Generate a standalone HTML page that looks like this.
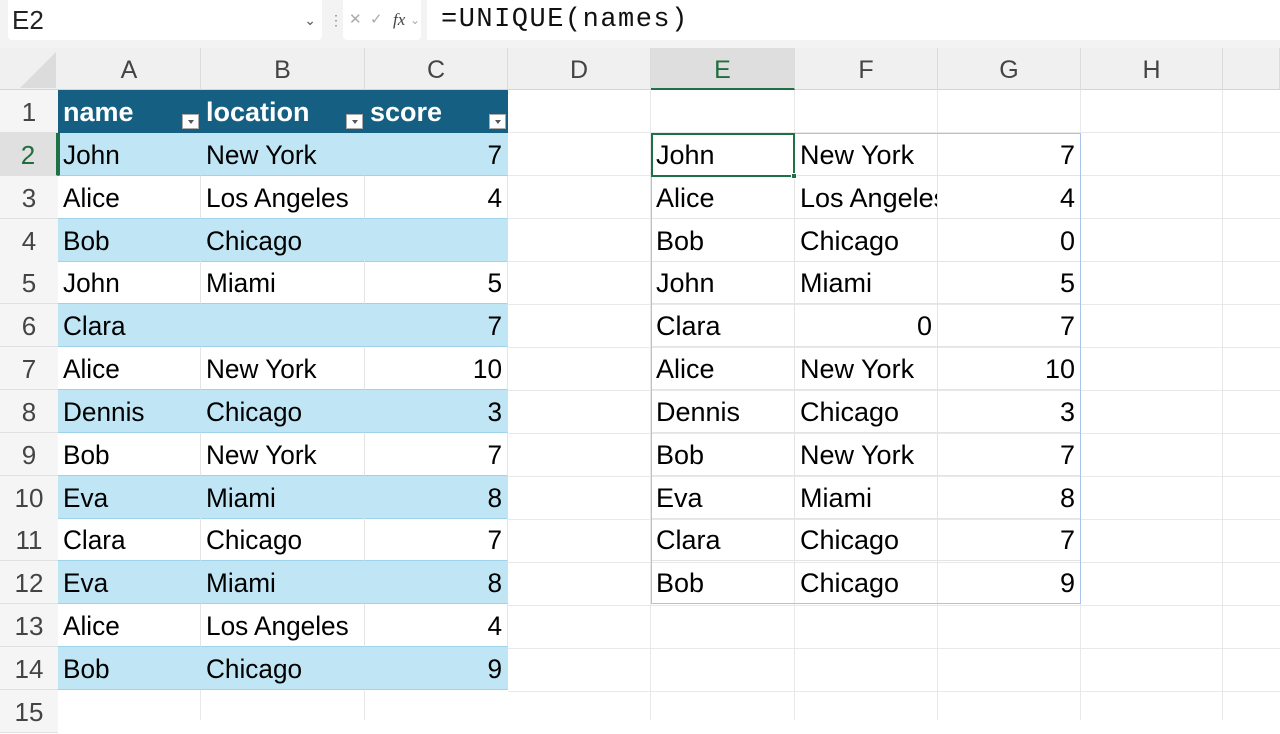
<!DOCTYPE html><html><head><style>
*{margin:0;padding:0;box-sizing:border-box}
body{width:1280px;height:720px;overflow:hidden;background:#fff;font-family:"Liberation Sans",sans-serif;position:relative}
.top{position:absolute;left:0;top:0;width:1280px;height:48px;background:#f3f3f3}
.nb{position:absolute;left:8px;top:0;width:314px;height:40px;background:#fff;border-radius:0 0 4px 4px;font-size:26px;line-height:40px;padding-left:4px;color:#222}
.fb{position:absolute;left:343px;top:0;width:78px;height:40px;background:#fff;border-radius:0 0 4px 4px;color:#aaa;font-size:15px;line-height:40px}
.ff{position:absolute;left:427px;top:0;width:853px;height:40px;background:#fff;font-size:27px;line-height:40px;padding-left:14px;font-family:"Liberation Mono",monospace;color:#111;letter-spacing:1.5px}
.ch{position:absolute;top:48px;height:42px;background:#f0f0f0;border-right:1px solid #dcdcdc;border-bottom:1px solid #d4d4d4;text-align:center;font-size:25px;line-height:44px;color:#444}
.rh{position:absolute;left:0;width:58px;height:43px;background:#f5f5f5;border-bottom:1px solid #e0e0e0;text-align:center;font-size:26px;line-height:44px;color:#444}
.c{position:absolute;height:43px;border-right:1px solid #e4e4e4;border-bottom:1px solid #e4e4e4;font-size:27px;line-height:45px;color:#000;white-space:nowrap;overflow:hidden;padding:0 5px}
.n span{display:inline-block;transform:scaleX(.97);transform-origin:left}
.n.rt span{transform-origin:right}
.rt{text-align:right}
.b{background:#c0e6f5;border-right-color:#c0e6f5;border-bottom-color:#9fd3ec}
.w{border-bottom-color:#9fd3ec}
.hd{background:#156082;color:#fff;font-weight:bold;border-color:#156082}
.dd{position:absolute;bottom:3px;width:17px;height:15px;background:#fff;border:1px solid #aaa}
.dd:after{content:"";position:absolute;left:5px;top:5px;border:3px solid transparent;border-top:4px solid #555}
</style></head><body>
<div class="top"></div>
<div class="nb">E2<span style="position:absolute;right:6px;top:0;font-size:14px;color:#555">&#8964;</span></div>
<div style="position:absolute;left:329px;top:12px;color:#888;font-size:14px">&#8942;</div>
<div class="fb"><span style="position:absolute;left:6px">&#10005;</span><span style="position:absolute;left:27px">&#10003;</span><i style="position:absolute;left:50px;color:#444;font-family:'Liberation Serif',serif;font-size:17px">fx</i><span style="position:absolute;left:67px;font-size:12px">&#8964;</span></div>
<div class="ff">=UNIQUE(names)</div>
<div style="position:absolute;left:0;top:48px;width:58px;height:42px;background:#f0f0f0;border-bottom:1px solid #d4d4d4"></div>
<div style="position:absolute;left:20px;top:52px;width:0;height:0;border-left:36px solid transparent;border-bottom:36px solid #dcdcdc"></div>
<div class="ch" style="left:58px;width:143px">A</div>
<div class="ch" style="left:201px;width:164px">B</div>
<div class="ch" style="left:365px;width:143px">C</div>
<div class="ch" style="left:508px;width:143px">D</div>
<div class="ch" style="left:651px;width:144px;background:#dedede;color:#1e6e3e;border-bottom:2px solid #1e7145">E</div>
<div class="ch" style="left:795px;width:143px">F</div>
<div class="ch" style="left:938px;width:143px">G</div>
<div class="ch" style="left:1081px;width:142px">H</div>
<div class="ch" style="left:1223px;width:57px"></div>

<div class="rh" style="top:90px">1</div>
<div class="rh" style="top:133px;background:#e0e0e0;color:#1e6e3e;border-right:2px solid #1e7145">2</div>
<div class="rh" style="top:176px">3</div>
<div class="rh" style="top:219px">4</div>
<div class="rh" style="top:261px">5</div>
<div class="rh" style="top:304px">6</div>
<div class="rh" style="top:347px">7</div>
<div class="rh" style="top:390px">8</div>
<div class="rh" style="top:433px">9</div>
<div class="rh" style="top:476px">10</div>
<div class="rh" style="top:518px">11</div>
<div class="rh" style="top:561px">12</div>
<div class="rh" style="top:604px">13</div>
<div class="rh" style="top:647px">14</div>
<div class="rh" style="top:690px">15</div>

<div style="position:absolute;left:508px;top:90px;width:772px;height:630px;background:
repeating-linear-gradient(to bottom,transparent 0 42px,#e8e8e8 42px 43px)"></div>
<div style="position:absolute;left:650px;top:90px;width:1px;height:630px;background:#e8e8e8"></div>
<div style="position:absolute;left:794px;top:90px;width:1px;height:630px;background:#e8e8e8"></div>
<div style="position:absolute;left:937px;top:90px;width:1px;height:630px;background:#e8e8e8"></div>
<div style="position:absolute;left:1080px;top:90px;width:1px;height:630px;background:#e8e8e8"></div>
<div style="position:absolute;left:1222px;top:90px;width:1px;height:630px;background:#e8e8e8"></div>
<div style="position:absolute;left:58px;top:690px;width:450px;height:30px;background:linear-gradient(to right,transparent 142px,#e8e8e8 142px 143px,transparent 143px 306px,#e8e8e8 306px 307px,transparent 307px)"></div>

<div class="c hd" style="left:58px;top:90px;width:143px">name<div class="dd" style="right:1px"></div></div>
<div class="c hd" style="left:201px;top:90px;width:164px">location<div class="dd" style="right:1px"></div></div>
<div class="c hd" style="left:365px;top:90px;width:143px">score<div class="dd" style="right:1px"></div></div>

<div class="c n b" style="left:58px;top:133px;width:143px;border-left:2px solid #1e7145;padding-left:3px"><span>John</span></div><div class="c n b" style="left:201px;top:133px;width:164px"><span>New York</span></div><div class="c n b rt" style="left:365px;top:133px;width:143px"><span>7</span></div>
<div class="c n w" style="left:58px;top:176px;width:143px"><span>Alice</span></div><div class="c n w" style="left:201px;top:176px;width:164px"><span>Los Angeles</span></div><div class="c n w rt" style="left:365px;top:176px;width:143px;border-right-color:#e4e4e4"><span>4</span></div>
<div class="c n b" style="left:58px;top:219px;width:143px"><span>Bob</span></div><div class="c n b" style="left:201px;top:219px;width:164px"><span>Chicago</span></div><div class="c n b rt" style="left:365px;top:219px;width:143px"><span></span></div>
<div class="c n w" style="left:58px;top:261px;width:143px"><span>John</span></div><div class="c n w" style="left:201px;top:261px;width:164px"><span>Miami</span></div><div class="c n w rt" style="left:365px;top:261px;width:143px"><span>5</span></div>
<div class="c n b" style="left:58px;top:304px;width:143px"><span>Clara</span></div><div class="c n b" style="left:201px;top:304px;width:164px"><span></span></div><div class="c n b rt" style="left:365px;top:304px;width:143px"><span>7</span></div>
<div class="c n w" style="left:58px;top:347px;width:143px"><span>Alice</span></div><div class="c n w" style="left:201px;top:347px;width:164px"><span>New York</span></div><div class="c n w rt" style="left:365px;top:347px;width:143px"><span>10</span></div>
<div class="c n b" style="left:58px;top:390px;width:143px"><span>Dennis</span></div><div class="c n b" style="left:201px;top:390px;width:164px"><span>Chicago</span></div><div class="c n b rt" style="left:365px;top:390px;width:143px"><span>3</span></div>
<div class="c n w" style="left:58px;top:433px;width:143px"><span>Bob</span></div><div class="c n w" style="left:201px;top:433px;width:164px"><span>New York</span></div><div class="c n w rt" style="left:365px;top:433px;width:143px"><span>7</span></div>
<div class="c n b" style="left:58px;top:476px;width:143px"><span>Eva</span></div><div class="c n b" style="left:201px;top:476px;width:164px"><span>Miami</span></div><div class="c n b rt" style="left:365px;top:476px;width:143px"><span>8</span></div>
<div class="c n w" style="left:58px;top:518px;width:143px"><span>Clara</span></div><div class="c n w" style="left:201px;top:518px;width:164px"><span>Chicago</span></div><div class="c n w rt" style="left:365px;top:518px;width:143px"><span>7</span></div>
<div class="c n b" style="left:58px;top:561px;width:143px"><span>Eva</span></div><div class="c n b" style="left:201px;top:561px;width:164px"><span>Miami</span></div><div class="c n b rt" style="left:365px;top:561px;width:143px"><span>8</span></div>
<div class="c n w" style="left:58px;top:604px;width:143px"><span>Alice</span></div><div class="c n w" style="left:201px;top:604px;width:164px"><span>Los Angeles</span></div><div class="c n w rt" style="left:365px;top:604px;width:143px"><span>4</span></div>
<div class="c n b" style="left:58px;top:647px;width:143px"><span>Bob</span></div><div class="c n b" style="left:201px;top:647px;width:164px"><span>Chicago</span></div><div class="c n b rt" style="left:365px;top:647px;width:143px"><span>9</span></div>

<div style="position:absolute;left:651px;top:133px;width:430px;height:471px;border:1px solid #a9c3ec;z-index:2"></div>
<div style="position:absolute;left:651px;top:133px;width:144px;height:44px;border:2px solid #1e7145;z-index:3"><div style="position:absolute;right:-4px;bottom:-4px;width:6px;height:6px;background:#1e7145;border:1px solid #fff"></div></div>

<div class="c" style="left:651px;top:133px;width:144px">John</div><div class="c" style="left:795px;top:133px;width:143px">New York</div><div class="c rt" style="left:938px;top:133px;width:143px">7</div>
<div class="c" style="left:651px;top:176px;width:144px">Alice</div><div class="c" style="left:795px;top:176px;width:143px;padding-right:0">Los Angeles</div><div class="c rt" style="left:938px;top:176px;width:143px">4</div>
<div class="c" style="left:651px;top:219px;width:144px">Bob</div><div class="c" style="left:795px;top:219px;width:143px">Chicago</div><div class="c rt" style="left:938px;top:219px;width:143px">0</div>
<div class="c" style="left:651px;top:261px;width:144px">John</div><div class="c" style="left:795px;top:261px;width:143px">Miami</div><div class="c rt" style="left:938px;top:261px;width:143px">5</div>
<div class="c" style="left:651px;top:304px;width:144px">Clara</div><div class="c rt" style="left:795px;top:304px;width:143px">0</div><div class="c rt" style="left:938px;top:304px;width:143px">7</div>
<div class="c" style="left:651px;top:347px;width:144px">Alice</div><div class="c" style="left:795px;top:347px;width:143px">New York</div><div class="c rt" style="left:938px;top:347px;width:143px">10</div>
<div class="c" style="left:651px;top:390px;width:144px">Dennis</div><div class="c" style="left:795px;top:390px;width:143px">Chicago</div><div class="c rt" style="left:938px;top:390px;width:143px">3</div>
<div class="c" style="left:651px;top:433px;width:144px">Bob</div><div class="c" style="left:795px;top:433px;width:143px">New York</div><div class="c rt" style="left:938px;top:433px;width:143px">7</div>
<div class="c" style="left:651px;top:476px;width:144px">Eva</div><div class="c" style="left:795px;top:476px;width:143px">Miami</div><div class="c rt" style="left:938px;top:476px;width:143px">8</div>
<div class="c" style="left:651px;top:518px;width:144px">Clara</div><div class="c" style="left:795px;top:518px;width:143px">Chicago</div><div class="c rt" style="left:938px;top:518px;width:143px">7</div>
<div class="c" style="left:651px;top:561px;width:144px">Bob</div><div class="c" style="left:795px;top:561px;width:143px">Chicago</div><div class="c rt" style="left:938px;top:561px;width:143px">9</div>
</body></html>
